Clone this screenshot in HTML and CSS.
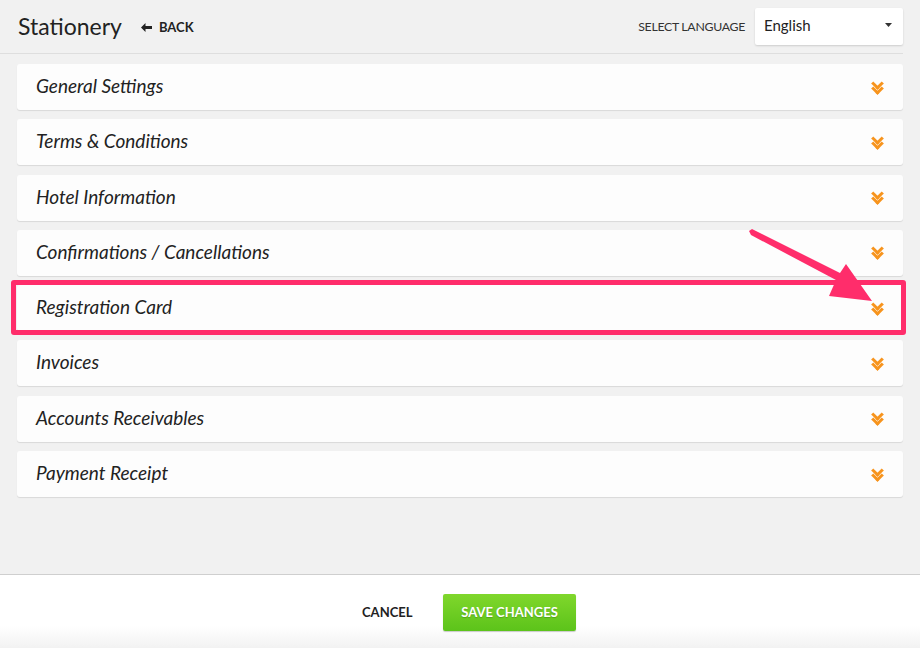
FILE: index.html
```html
<!DOCTYPE html>
<html>
<head>
<meta charset="utf-8">
<link rel="stylesheet" href="styles.css">
</head>
<body>
<div class="page">
  <header class="topbar">
    <div class="title-group">
      <h1 class="title">Stationery</h1>
      <a class="back"><svg width="11" height="9" viewBox="0 0 11 9"><path d="M0 4.5 L4.5 0 V3 H11 V6 H4.5 V9 Z" fill="#222"/></svg>BACK</a>
    </div>
    <div class="lang-group">
      <span class="lang-label">SELECT LANGUAGE</span>
      <div class="select"><span>English</span><svg width="7" height="4" viewBox="0 0 7 4"><path d="M0 0 H7 L3.5 4 Z" fill="#333"/></svg></div>
    </div>
  </header>
  <main class="panels">
    <div class="panel"><span>General Settings</span><i class="chev"></i></div>
    <div class="panel"><span>Terms &amp; Conditions</span><i class="chev"></i></div>
    <div class="panel"><span>Hotel Information</span><i class="chev"></i></div>
    <div class="panel"><span>Confirmations / Cancellations</span><i class="chev"></i></div>
    <div class="panel highlighted"><span>Registration Card</span><i class="chev"></i></div>
    <div class="panel"><span>Invoices</span><i class="chev"></i></div>
    <div class="panel"><span>Accounts Receivables</span><i class="chev"></i></div>
    <div class="panel"><span>Payment Receipt</span><i class="chev"></i></div>
  </main>
  <footer class="footer">
    <button class="cancel">CANCEL</button>
    <button class="save">SAVE CHANGES</button>
  </footer>
  <svg class="arrow" width="920" height="648" viewBox="0 0 920 648">
    <path d="M749 231 L751 235 L836 280 L829 296 L872 301 L846 264 L840 273 L752 229 Z" fill="#ff2d6b"/>
  </svg>
</div>
</body>
</html>
```
FILE: styles.css
```css
* { box-sizing: border-box; }
html, body { margin: 0; padding: 0; }
body {
  font-family: Lato, "Open Sans", sans-serif;
  background: #f1f1f1;
  color: #222;
}
.page {
  position: relative;
  width: 920px;
  height: 648px;
  display: flex;
  flex-direction: column;
  overflow: hidden;
}
.topbar {
  height: 54px;
  margin-right: 17px;
  border-bottom: 1px solid #dedede;
  display: flex;
  align-items: center;
  justify-content: space-between;
  padding-left: 18px;
}
.title-group { display: flex; align-items: center; gap: 19px; }
.title {
  margin: 0 0 2px 0;
  font-size: 23px;
  font-weight: 400;
  color: #222;
}
.back {
  display: flex;
  align-items: center;
  gap: 7px;
  font-size: 13px;
  font-weight: 700;
  color: #222;
  margin-top: 1px;
}
.lang-group { display: flex; align-items: center; gap: 10px; }
.lang-label { font-size: 12.3px; color: #333; letter-spacing: -0.3px; margin-bottom: 1px; }
.select {
  width: 148px;
  height: 37px;
  background: #fff;
  box-shadow: 0 1px 2px rgba(0,0,0,0.15);
  border-radius: 2px;
  display: flex;
  align-items: center;
  justify-content: space-between;
  padding: 0 11px 2px 9px;
  font-size: 15px;
  color: #222;
  margin-bottom: 1px;
}
.panels {
  flex: 1;
  padding: 10px 17px 0 17px;
  display: flex;
  flex-direction: column;
  gap: 9.3px;
}
.panel {
  height: 46px;
  background: #fdfdfd;
  border-radius: 3px;
  box-shadow: 0 1px 1px rgba(0,0,0,0.1);
  display: flex;
  align-items: center;
  justify-content: space-between;
  padding: 0 21px 3px 19px;
  font-size: 19px;
  font-style: italic;
  color: #222;
  position: relative;
}
.panel .chev { margin-top: 2px; }
.panel.highlighted::after {
  content: "";
  position: absolute;
  left: -6px; right: -3px; top: -5px; bottom: -4px;
  border: 5px solid #ff2d6b;
  border-radius: 3px;
}
.chev {
  width: 11px;
  height: 12px;
  position: relative;
}
.chev::before, .chev::after {
  content: "";
  position: absolute;
  left: 2px;
  width: 6px;
  height: 6px;
  border-right: 3px solid #f7941d;
  border-bottom: 3px solid #f7941d;
  transform: rotate(45deg);
}
.chev::before { top: -2px; }
.chev::after { top: 3px; }
.footer {
  height: 74px;
  background: linear-gradient(#fff 70%, #f2f2f2);
  border-top: 1px solid #cfcfcf;
  display: flex;
  align-items: center;
  justify-content: center;
  gap: 31px;
  padding-left: 18px;
}
.cancel {
  background: none;
  border: none;
  font-family: inherit;
  font-size: 13px;
  font-weight: 700;
  color: #222;
  padding: 0;
  width: 50px;
}
.save {
  font-family: inherit;
  width: 133px;
  height: 37px;
  border: none;
  border-radius: 2px;
  background: linear-gradient(#80d72c, #5cc31a);
  box-shadow: 0 1px 1px rgba(0,0,0,0.2);
  color: #fff;
  font-size: 13px;
  font-weight: 700;
  text-shadow: 0 1px 1px rgba(0,0,0,0.2);
  margin-top: 1px;
}
.arrow {
  position: absolute;
  left: 0; top: 0;
  pointer-events: none;
}
```
